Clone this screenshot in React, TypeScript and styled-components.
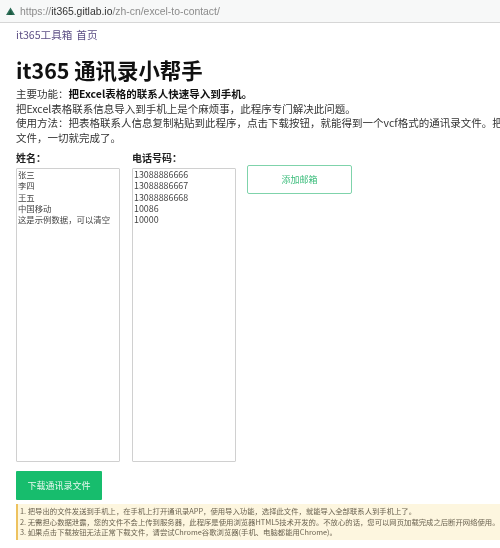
import React from "react";
import styled, { createGlobalStyle } from "styled-components";

const Global = createGlobalStyle`
  html, body { margin: 0; padding: 0; background: #fff; overflow: hidden; }
  body { font-family: "Noto Sans CJK SC", "Liberation Sans", sans-serif; color: #333; }
`;
const Page = styled.div`
  width: 500px;
  height: 548px;
  overflow: hidden;
  display: flex;
  flex-direction: column;
  filter: blur(0.35px);
`;
const AddressBar = styled.div`
  height: 23px;
  flex: none;
  box-sizing: border-box;
  display: flex;
  align-items: center;
  gap: 4px;
  padding: 0 0 0 5px;
  background: #f7f8f8;
  border-bottom: 1px solid #d6d6d6;
  font-family: "Liberation Sans", sans-serif;
  font-size: 10.4px;
  color: #8b8b8b;
  b { font-weight: 400; color: #333; }
`;
const Content = styled.main`
  flex: 1;
  display: flex;
  flex-direction: column;
  padding: 4px 0 0 16px;
  min-height: 0;
`;
const Nav = styled.nav`
  display: flex;
  gap: 4px;
  height: 16px;
  align-items: center;
  font-size: 10.6px;
  line-height: 16px;
`;
const NavLink = styled.a`
  color: #5d4f85;
  text-decoration: none;
`;
const Title = styled.h1`
  margin: 12px 0 0;
  font-size: 21.4px;
  line-height: 30px;
  font-weight: 700;
  color: #111;
  white-space: nowrap;
  font-family: "Noto Sans CJK SC", "DejaVu Sans", sans-serif;
`;
const Intro = styled.div`
  margin-top: 2px;
  font-size: 10.5px;
  line-height: 14.7px;
  white-space: nowrap;
  color: #333;
  strong { font-weight: 700; color: #111; }
`;
const Columns = styled.div`
  display: flex;
  margin-top: 4px;
  align-items: flex-start;
`;
const Field = styled.div`
  display: flex;
  flex-direction: column;
  width: 104px;
  margin-right: 12px;
  & + & { margin-right: 11px; }
`;
const Label = styled.label`
  font-size: 10px;
  line-height: 15px;
  font-weight: 700;
  color: #222;
  height: 18px;
`;
const Box = styled.textarea<{ $small?: boolean }>`
  box-sizing: border-box;
  width: 104px;
  height: 294px;
  margin: 0;
  padding: 0 1px;
  border: 1px solid #d0d0d0;
  border-radius: 1px;
  resize: none;
  outline: none;
  overflow: hidden;
  font-family: "Noto Sans CJK SC", "Liberation Sans", sans-serif;
  font-size: ${(p) => (p.$small ? "8.4px" : "8.9px")};
  line-height: 11.4px;
  color: #444;
`;
const OutlineButton = styled.button`
  box-sizing: border-box;
  width: 105px;
  height: 29px;
  margin-top: 15px;
  background: #fff;
  border: 1px solid #7fd3ab;
  border-radius: 2px;
  color: #3cbd7c;
  font-family: inherit;
  font-size: 9px;
`;
const PrimaryButton = styled.button`
  box-sizing: border-box;
  align-self: flex-start;
  width: 86px;
  height: 29px;
  margin-top: 9px;
  background: #17bd6d;
  border: none;
  border-radius: 1px;
  color: #e8f8ef;
  font-family: inherit;
  font-size: 9px;
`;
const Notice = styled.div`
  margin-top: 4px;
  box-sizing: border-box;
  height: 36px;
  padding: 2px 0 0 2px;
  background: #fdf6df;
  border-left: 2px solid #edc25f;
  font-size: 7.35px;
  line-height: 10.7px;
  color: #6a6250;
  white-space: nowrap;
  overflow: hidden;
`;

const Logo = () => (
  <svg width="11" height="9" viewBox="0 0 12 10" aria-hidden="true">
    <path d="M6 0.5 L11 9 H1 Z" fill="#2f6f5a" />
    <path d="M6 3 L8.5 9 H3.5 Z" fill="#1c5a40" />
  </svg>
);

export default function App() {
  return (
    <Page>
      <Global />
      <AddressBar>
        <Logo />
        <span>https://<b>it365.gitlab.io</b>/zh-cn/excel-to-contact/</span>
      </AddressBar>
      <Content>
        <Nav>
          <NavLink href="#">it365工具箱</NavLink>
          <NavLink href="#">首页</NavLink>
        </Nav>
        <Title>it365 通讯录小帮手</Title>
        <Intro>
          主要功能：<strong>把Excel表格的联系人快速导入到手机。</strong>
          <br />
          把Excel表格联系信息导入到手机上是个麻烦事，此程序专门解决此问题。
          <br />
          使用方法：把表格联系人信息复制粘贴到此程序，点击下载按钮，就能得到一个vcf格式的通讯录文件。把
          <br />
          文件，一切就完成了。
        </Intro>
        <Columns>
          <Field>
            <Label>姓名：</Label>
            <Box $small readOnly defaultValue={"张三\n李四\n王五\n中国移动\n这是示例数据，可以清空"} />
          </Field>
          <Field>
            <Label>电话号码：</Label>
            <Box readOnly defaultValue={"13088886666\n13088886667\n13088886668\n10086\n10000"} />
          </Field>
          <OutlineButton>添加邮箱</OutlineButton>
        </Columns>
        <PrimaryButton>下载通讯录文件</PrimaryButton>
        <Notice>
          1. 把导出的文件发送到手机上，在手机上打开通讯录APP，使用导入功能，选择此文件，就能导入全部联系人到手机上了。
          <br />
          2. 无需担心数据泄露，您的文件不会上传到服务器，此程序是使用浏览器HTML5技术开发的。不放心的话，您可以网页加载完成之后断开网络使用。
          <br />
          3. 如果点击下载按钮无法正常下载文件，请尝试Chrome谷歌浏览器(手机、电脑都能用Chrome)。
        </Notice>
      </Content>
    </Page>
  );
}
